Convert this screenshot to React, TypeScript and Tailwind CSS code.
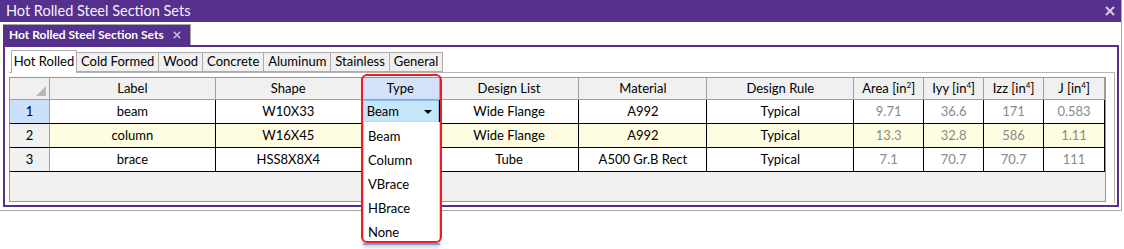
import { ReactNode } from 'react'

interface Col { key: string, title: ReactNode, w: string, num?: boolean }

const cols: Col[] = [
  { key: 'label', title: 'Label', w: 'w-[166px]' },
  { key: 'shape', title: 'Shape', w: 'w-[146px]' },
  { key: 'type', title: 'Type', w: 'w-[78px]' },
  { key: 'list', title: 'Design List', w: 'w-[140px]' },
  { key: 'material', title: 'Material', w: 'w-[128px]' },
  { key: 'rule', title: 'Design Rule', w: 'w-[147px]' },
  { key: 'area', title: <>Area [in<sup className="text-[8px]">2</sup>]</>, w: 'w-[70px]', num: true },
  { key: 'iyy', title: <>Iyy [in<sup className="text-[8px]">4</sup>]</>, w: 'w-[60px]', num: true },
  { key: 'izz', title: <>Izz [in<sup className="text-[8px]">4</sup>]</>, w: 'w-[60px]', num: true },
  { key: 'j', title: <>J [in<sup className="text-[8px]">4</sup>]</>, w: 'w-[61px]', num: true },
]

// type column of rows 2 and 3 sits under the open dropdown, so left blank
const rows: Record<string, string>[] = [
  { label: 'beam', shape: 'W10X33', type: 'Beam', list: 'Wide Flange', material: 'A992', rule: 'Typical', area: '9.71', iyy: '36.6', izz: '171', j: '0.583' },
  { label: 'column', shape: 'W16X45', type: '', list: 'Wide Flange', material: 'A992', rule: 'Typical', area: '13.3', iyy: '32.8', izz: '586', j: '1.11' },
  { label: 'brace', shape: 'HSS8X8X4', type: '', list: 'Tube', material: 'A500 Gr.B Rect', rule: 'Typical', area: '7.1', iyy: '70.7', izz: '70.7', j: '111' },
]

const tabs = ['Cold Formed', 'Wood', 'Concrete', 'Aluminum', 'Stainless', 'General']

function Cross({ size, color }: { size: number, color: string }) {
  return (
    <svg width={size} height={size} viewBox="0 0 10 10">
      <path d="M1 1L9 9M9 1L1 9" stroke={color} strokeWidth="2" />
    </svg>
  )
}

export default function App() {
  return (
    <div className="w-[1124px] h-[249px] bg-white relative text-[13px] text-black" style={{ fontFamily: 'Lato, "Noto Sans", sans-serif' }}>
      <div className="w-[1122px] h-[211px] border-r border-b border-[#a6a6a6] flex flex-col">
        <div className="h-[22px] bg-[#55308d] flex items-center justify-between pl-[6px] pr-[6px] shrink-0">
          <span className="text-[14.5px] text-[#f4f0fa] leading-none whitespace-nowrap">Hot Rolled Steel Section Sets</span>
          <Cross size={10} color="#d4cce4" />
        </div>

        <div className="flex-1 flex flex-col pl-[3px] pr-[2px] pt-[2px] pb-[3px]">
          <div className="h-[21px] flex shrink-0">
            <div className="w-[188px] bg-[#55308d] border-t border-r border-[#a6a6a6] flex items-center pl-[6px] gap-[9px] whitespace-nowrap">
              <span className="font-bold text-white text-[12px]">Hot Rolled Steel Section Sets</span>
              <Cross size={8} color="#c9bfdc" />
            </div>
          </div>

          <div className="flex-1 border-2 border-[#55308d] flex flex-col pl-[4px] pr-[2px] pt-[2px] pb-[2px]">
            <div className="h-[24px] flex items-end pl-[2px] shrink-0 relative z-10">
              <div className="h-[23px] w-[66px] bg-white border border-b-0 border-[#acacac] flex items-center justify-center whitespace-nowrap">Hot Rolled</div>
              {tabs.map(t => (
                <div key={t} className="h-[20px] mb-[1px] bg-[#f0f0f0] border border-l-0 border-[#acacac] px-[4px] flex items-center whitespace-nowrap">{t}</div>
              ))}
            </div>

            <div className="flex-1 border-t border-r border-[#b4b4b4] -mt-[1px] pt-[4px] pr-[8px]">
              <div className="h-[125px] border border-[#7a9cc6] bg-[#f0f0f0]">
                <div className="flex h-[22px] border-b border-[#a0a0a0]">
                  <div className="w-[40px] border-r border-[#a0a0a0] relative">
                    <div className="absolute right-[3px] bottom-[3px] w-0 h-0 border-l-[10px] border-l-transparent border-b-[10px] border-b-[#b8b8b8]" />
                  </div>
                  {cols.map(c => (
                    <div key={c.key} className={`${c.w} border-r border-[#a0a0a0] flex items-center justify-center whitespace-nowrap ${c.key === 'type' ? 'bg-[#d3e2fa]' : ''}`}>{c.title}</div>
                  ))}
                </div>
                {rows.map((r, i) => (
                  <div key={i} className="flex h-[24px] border-b border-black">
                    <div className={`w-[40px] border-r border-[#a0a0a0] flex items-center justify-center ${i === 0 ? 'bg-[#cde0fb]' : 'bg-[#f0f0f0]'}`}>{i + 1}</div>
                    {cols.map(c => (
                      <div key={c.key} className={`${c.w} border-r border-black flex items-center justify-center whitespace-nowrap ${i === 1 ? 'bg-[#fffde1]' : 'bg-white'} ${c.num ? 'text-[#8a8a8a]' : ''}`}>
                        {c.key === 'type' && i === 0 ? (
                          <div className="w-full h-full bg-[#c5e5f9] border border-[#8ac0ea] flex items-center justify-between pl-[4px] pr-[6px]">
                            <span>Beam</span>
                            <span className="w-0 h-0 border-l-[4px] border-r-[4px] border-t-[4px] border-l-transparent border-r-transparent border-t-black" />
                          </div>
                        ) : r[c.key]}
                      </div>
                    ))}
                  </div>
                ))}
              </div>
            </div>
          </div>
        </div>
      </div>

      <div className="absolute left-[363px] top-[122px] w-[77px] h-[123px] bg-white border-x border-[#c8d4e4] border-b-2 border-b-[#6fa0d6] shadow-[0_2px_4px_rgba(0,0,0,0.2)] pt-[3px]">
        {['Beam', 'Column', 'VBrace', 'HBrace', 'None'].map(o => (
          <div key={o} className="h-[24px] flex items-center pl-[4px]">{o}</div>
        ))}
      </div>
      <div className="absolute left-[361px] top-[74px] w-[81px] h-[169px] border-2 border-[#ee1c24] rounded-[6px]" />
    </div>
  )
}
